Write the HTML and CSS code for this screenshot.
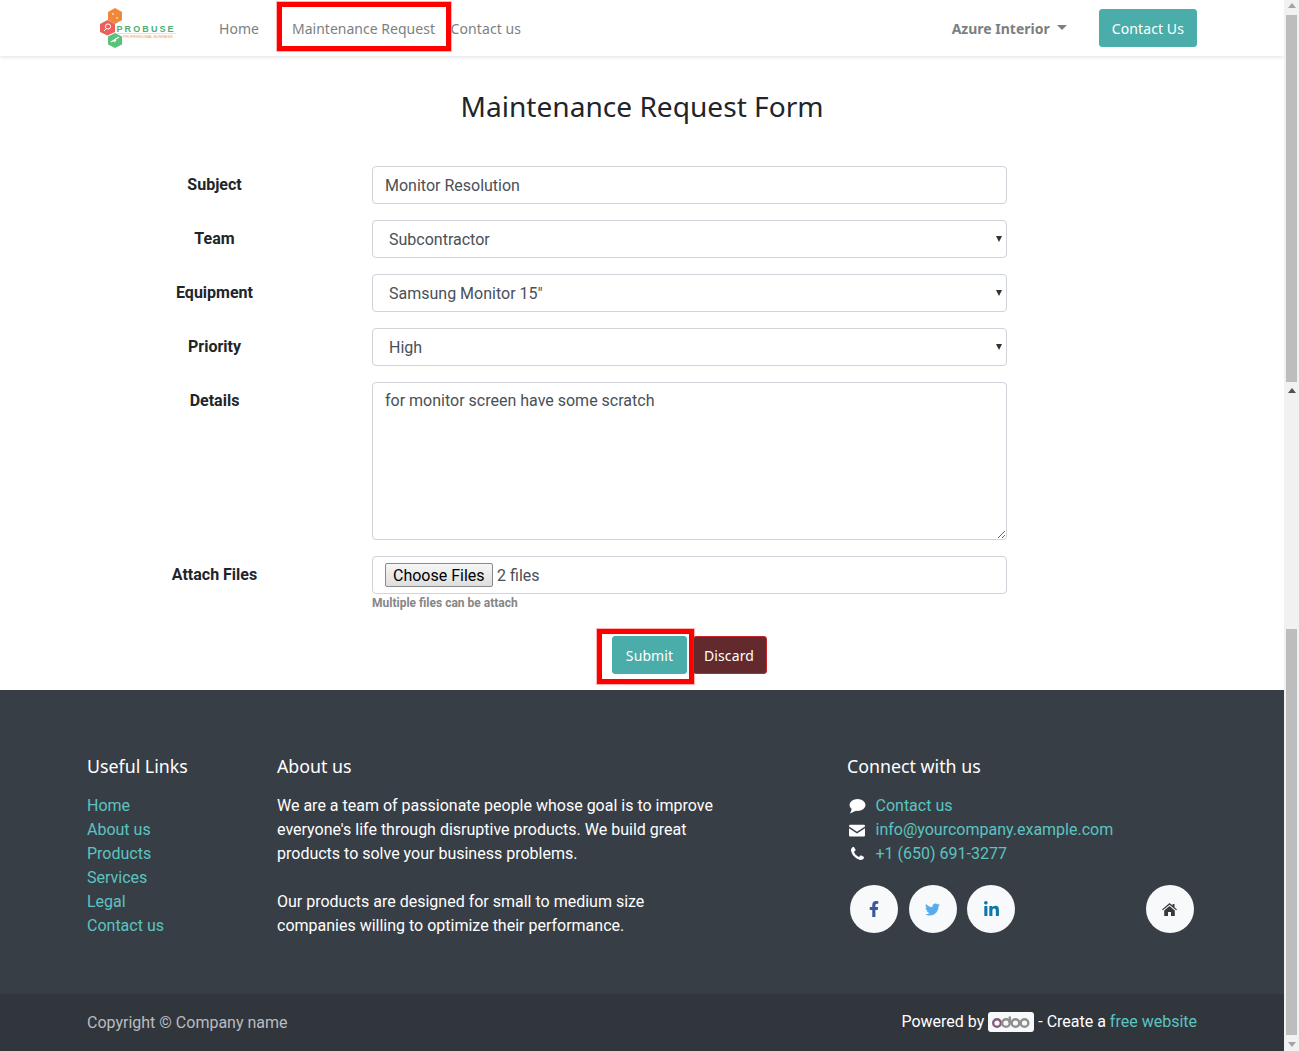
FILE: index.html
```html
<!DOCTYPE html>
<html lang="en">
<head>
<meta charset="utf-8">
<title>Maintenance Request Form</title>
<link rel="stylesheet" href="styles.css">
</head>
<body>
<div class="page">
  <header class="navbar">
    <div class="nav-inner">
      <a class="logo" href="#">
        <svg class="logo-mark" width="76" height="40" viewBox="0 0 76 40">
          <polygon points="15,0 22,4 22,12 15,16 8,12 8,4" fill="#f0883a"/>
          <polygon points="7.500,12 15,16 15,24 7.500,27.500 0,24 0,16" fill="#ee5f5b"/>
          <polygon points="15,25 22,28.500 22,36.500 15,40 8,36.500 8,28.500" fill="#5bc27a"/>
          <circle cx="8" cy="18.500" r="2.600" fill="none" stroke="#fff" stroke-width="1"/>
          <path d="M6 21l-2 2" stroke="#fff" stroke-width="1"/>
          <path d="M11 34l8-5M14 34l2-2" stroke="#fff" stroke-width="1.200"/>
          <circle cx="13" cy="6" r="1" fill="#fbd9b8"/><circle cx="17" cy="10" r="1" fill="#fbd9b8"/>
          <text x="16.500" y="23.500" class="logo-name">PROBUSE</text>
          <path d="M17 25.500h59" stroke="#d8d8d8" stroke-width=".7"/>
          <text x="23" y="29.500" class="logo-sub">PROFESSIONAL BUSINESS</text>
        </svg>
      </a>
      <nav class="nav-links">
        <a class="nav-link home" href="#">Home</a>
        <a class="nav-link marked" href="#">Maintenance Request</a>
        <a class="nav-link contact" href="#">Contact us</a>
      </nav>
      <div class="nav-right">
        <a class="user" href="#">Azure Interior<span class="caret"></span></a>
        <a class="btn btn-teal" href="#">Contact Us</a>
      </div>
    </div>
  </header>

  <main class="main">
    <h1 class="title">Maintenance Request Form</h1>
    <form class="form">
      <div class="row">
        <label class="label">Subject</label>
        <div class="field"><input class="control" type="text" value="Monitor Resolution"></div>
      </div>
      <div class="row">
        <label class="label">Team</label>
        <div class="field select-wrap"><select class="control plain"><option>Subcontractor</option></select></div>
      </div>
      <div class="row">
        <label class="label">Equipment</label>
        <div class="field select-wrap"><select class="control plain"><option>Samsung Monitor 15"</option></select></div>
      </div>
      <div class="row">
        <label class="label">Priority</label>
        <div class="field select-wrap"><select class="control plain"><option>High</option></select></div>
      </div>
      <div class="row">
        <label class="label">Details</label>
        <div class="field"><textarea class="control area">for monitor screen have some scratch</textarea></div>
      </div>
      <div class="row row-file">
        <label class="label">Attach Files</label>
        <div class="field">
          <div class="control file"><button class="file-btn" type="button">Choose Files</button><span class="file-name">2 files</span></div>
          <small class="hint">Multiple files can be attach</small>
        </div>
      </div>
      <div class="actions">
        <div class="marked-submit"><button class="btn btn-teal submit" type="button">Submit</button></div>
        <button class="btn btn-discard" type="button">Discard</button>
      </div>
    </form>
  </main>

  <footer class="footer">
    <div class="footer-top">
      <div class="footer-grid">
        <div>
          <h5 class="foot-title">Useful Links</h5>
          <ul class="foot-list">
            <li><a href="#">Home</a></li>
            <li><a href="#">About us</a></li>
            <li><a href="#">Products</a></li>
            <li><a href="#">Services</a></li>
            <li><a href="#">Legal</a></li>
            <li><a href="#">Contact us</a></li>
          </ul>
        </div>
        <div class="about">
          <h5 class="foot-title">About us</h5>
          <p>We are a team of passionate people whose goal is to improve everyone's life through disruptive products. We build great products to solve your business problems.</p>
          <p>Our products are designed for small to medium size companies willing to optimize their performance.</p>
        </div>
        <div class="connect">
          <h5 class="foot-title">Connect with us</h5>
          <ul class="foot-list contact-list">
            <li><svg class="c-icon" viewBox="0 0 18 16"><ellipse cx="9.500" cy="7" rx="8" ry="6" fill="#fff"/><path d="M4 10.500L2 15.500 8.500 12.500z" fill="#fff"/></svg><a href="#">Contact us</a></li>
            <li><svg class="c-icon" viewBox="0 0 18 16"><g transform="translate(1 1.500) scale(.889 .87)"><path d="M1.500 1.500h15c.8 0 1.500.7 1.500 1.500v.5L9 9.500 0 3.500V3c0-.8.7-1.500 1.500-1.500z" fill="#fff"/><path d="M0 5.500l9 6 9-6V13.500c0 .8-.7 1.500-1.500 1.500h-15C.7 15 0 14.300 0 13.500z" fill="#fff"/></g></svg><a href="#">info@yourcompany.example.com</a></li>
            <li><svg class="c-icon" viewBox="0 0 18 16"><g transform="translate(3 1) scale(.0092)"><path transform="translate(-192 -128)" fill="#fff" d="M1600 1240q0 27-10 70.500t-21 68.500q-21 50-122 106-94 51-186 51-27 0-53-3.500t-57.500-12.500-47-14.500-55.500-20.500-49-18q-98-35-175-83-127-79-264-216t-216-264q-48-77-83-175-3-9-18-49t-20.500-55.500-14.500-47-12.500-57.500-3.500-53q0-92 51-186 56-101 106-122 25-11 68.500-21t70.500-10q14 0 21 3 18 6 53 76 11 19 30 54t35 63.500 31 53.500q3 4 17.500 25t21.500 35.500 7 28.500q0 20-28.500 50t-62 55-62 53-28.500 46q0 9 5 22.500t8.500 20.500 14 24 11.500 19q76 137 174 235t235 174q2 1 19 11.500t24 14 20.500 8.500 22.500 5q18 0 46-28.500t53-62 55-62 50-28.500q14 0 28.500 7t35.500 21.500 25 17.500q25 15 53.500 31t63.500 35 54 30q70 35 76 53 3 7 3 21z"/></g></svg><a href="#">+1 (650) 691-3277</a></li>
          </ul>
          <div class="socials">
            <a class="social" href="#"><svg width="10" height="16" viewBox="0 0 320 512"><path fill="#3b5998" d="M279.140 288l14.220-92.660h-88.910v-60.130c0-25.350 12.420-50.060 52.240-50.060h40.420V6.260S260.430 0 225.360 0c-73.220 0-121.080 44.380-121.080 124.720v70.620H22.890V288h81.390v224h100.170V288z"/></svg></a>
            <a class="social s2" href="#"><svg width="15" height="15" viewBox="0 0 512 512"><path fill="#55acee" d="M459.370 151.716c.325 4.548.325 9.097.325 13.645 0 138.720-105.583 298.558-298.558 298.558-59.452 0-114.680-17.219-161.137-47.106 8.447.974 16.568 1.299 25.340 1.299 49.055 0 94.213-16.568 130.274-44.832-46.132-.975-84.792-31.188-98.112-72.772 6.498.974 12.995 1.624 19.818 1.624 9.421 0 18.843-1.300 27.614-3.573-48.081-9.747-84.143-51.980-84.143-102.985v-1.299c13.969 7.797 30.214 12.670 47.431 13.319-28.264-18.843-46.781-51.005-46.781-87.391 0-19.492 5.197-37.360 14.294-52.954 51.655 63.675 129.300 105.258 216.365 109.807-1.624-7.797-2.599-15.918-2.599-24.040 0-57.828 46.782-104.934 104.934-104.934 30.213 0 57.502 12.670 76.670 33.137 23.715-4.548 46.456-13.320 66.599-25.340-7.798 24.366-24.366 44.833-46.132 57.827 21.117-2.273 41.584-8.122 60.426-16.243-14.292 20.791-32.161 39.308-52.628 54.253z"/></svg></a>
            <a class="social s3" href="#"><svg width="15" height="17" viewBox="0 0 448 512"><path fill="#0e76a8" d="M100.280 448H7.400V148.900h92.880zM53.790 108.100C24.090 108.100 0 83.500 0 53.800a53.790 53.790 0 0 1 107.580 0c0 29.700-24.100 54.300-53.790 54.300zM447.900 448h-92.680V302.400c0-34.700-.7-79.200-48.290-79.200-48.290 0-55.690 37.700-55.690 76.700V448h-92.780V148.900h89.080v40.800h1.300c12.400-23.500 42.690-48.300 87.880-48.300 94 0 111.280 61.900 111.280 142.300V448z"/></svg></a>
            <a class="social s4" href="#"><svg width="15" height="13" viewBox="0 0 15 13"><path fill="#343a40" d="M7.500 0L0 6.400l.8.900L7.500 1.700l6.700 5.600.8-.9-2.500-2.100V.9h-1.800v1.700z"/><path fill="#343a40" d="M7.500 3L2.200 7.400V13h3.800V9h3v4h3.800V7.400z"/></svg></a>
          </div>
        </div>
      </div>
    </div>
    <div class="footer-bottom">
      <div class="bottom-inner">
        <span class="copy">Copyright © Company name</span>
        <span class="powered">Powered by <span class="odoo"><svg width="40" height="14" viewBox="0 0 40 14"><circle cx="6" cy="8" r="3.800" fill="none" stroke="#875a7b" stroke-width="2.400"/><circle cx="15" cy="8" r="3.800" fill="none" stroke="#8f8f8f" stroke-width="2.400"/><path d="M18.800 1.500V8" stroke="#8f8f8f" stroke-width="2.400"/><circle cx="24.500" cy="8" r="3.800" fill="none" stroke="#8f8f8f" stroke-width="2.400"/><circle cx="33.500" cy="8" r="3.800" fill="none" stroke="#8f8f8f" stroke-width="2.400"/></svg></span> - Create a <a href="#">free website</a></span>
      </div>
    </div>
  </footer>

  <div class="scrollbar" aria-hidden="true">
    <span class="sb-arrow up"></span>
    <span class="sb-thumb t1"></span>
    <span class="sb-arrow up a2"></span>
    <span class="sb-thumb t2"></span>
    <span class="sb-arrow down"></span>
  </div>
</div>
</body>
</html>
```

FILE: styles.css
```css
* { box-sizing: border-box; }
html, body { margin: 0; padding: 0; height: 1051px; overflow: hidden; }
body { font-family: Roboto, sans-serif; font-size: 16px; line-height: 24px; color: #212529; background: #fff; }
a { text-decoration: none; }
.page { position: relative; width: 1299px; height: 1051px; padding-right: 15px; overflow: hidden; }

.navbar { height: 56px; background: #fff; box-shadow: 0 1px 4px rgba(0,0,0,.12); position: relative; font-family: "Noto Sans", sans-serif; }
.nav-inner { display: flex; height: 56px; margin: 0 87px 0 100px; }
.logo { display: block; width: 76px; margin-top: 8px; }
.logo-mark { display: block; }
.logo-name { font-family: "Liberation Sans", sans-serif; font-size: 9px; font-weight: 700; letter-spacing: 2.100px; fill: #4fae73; }
.logo-sub { font-family: "Liberation Sans", sans-serif; font-size: 3.800px; fill: #ef9a4c; }
.nav-links { display: flex; margin-left: 43px; }
.nav-link { color: #7c7f82; font-size: 14px; line-height: 24px; letter-spacing: .02px; }
.home { padding-top: 17px; margin-right: 18px; }
.marked { height: 49px; margin-top: 2px; border: 5px solid #f00; padding: 10px 10.500px 0 10px; box-shadow: 0 0 0 1px rgba(255,0,0,.3); }
.contact { padding-top: 17px; letter-spacing: .1px; }
.nav-right { margin-left: auto; display: flex; align-items: center; }
.user { color: #7c7f82; font-size: 14px; font-weight: 700; display: flex; align-items: center; margin-right: 32px; padding-top: 1px; }
.caret { width: 0; height: 0; margin-left: 7px; margin-top: -3px; border: 5px solid transparent; border-top-color: #7c7f82; border-bottom: 0; }
.btn { display: inline-block; font-family: "Noto Sans", sans-serif; font-size: 14px; line-height: 24px; padding: 7px 12px 5px; border: 1px solid transparent; border-radius: 3px; color: #fff; letter-spacing: .1px; cursor: pointer; }
.btn-teal { background: #4aadaa; border-color: #4aadaa; }
.nav-right .btn { height: 38px; }

.main { height: 634px; }
.title { margin: 0; padding-top: 31px; height: 110px; text-align: center; font-family: "Noto Sans", sans-serif; font-weight: 400; font-size: 28.100px; line-height: 38px; color: #212529; }
.form { padding-left: 72px; }
.row { display: flex; margin-bottom: 16px; }
.label { width: 285px; text-align: center; font-weight: 700; line-height: 38px; color: #212529; }
.field { width: 635px; margin-left: 15px; }
.control { display: block; width: 100%; height: 38px; padding: 6px 12px; font-family: Roboto, sans-serif; font-size: 16px; line-height: 24px; color: #495057; background: #fff; border: 1px solid #ced4da; border-radius: 4px; }
.plain { appearance: none; padding: 7px 12px 5px 16px; }
.select-wrap { position: relative; }
.select-wrap::after { content: ""; position: absolute; right: 5px; top: 16px; border: 3.500px solid transparent; border-top: 6px solid #333; border-bottom: 0; pointer-events: none; }
.area { height: 158px; }
.row-file { margin-bottom: 0; }
.file { display: flex; align-items: center; }
.file-btn { height: 24px; padding: 0 7px; font-family: Roboto, sans-serif; font-size: 16px; color: #000; background: linear-gradient(#f6f6f6, #dedede); border: 1px solid #8a8a8a; border-radius: 2px; }
.file-name { margin-left: 4px; padding-top: 1px; padding-left: .5px; }
.hint { display: block; font-size: 12px; line-height: 18px; font-weight: 700; color: #868686; }
.actions { display: flex; margin-top: 17px; padding-left: 525px; }
.marked-submit { display: flex; height: 55px; width: 97px; border: 5px solid #f00; padding: 2px 0 0 10px; box-shadow: 0 0 0 1px rgba(255,0,0,.3); }
.submit { height: 38px; width: 75px; padding: 7px 0 5px; text-align: center; }
.btn-discard { margin-left: -1px; margin-top: 7px; height: 38px; width: 74px; padding: 7px 2px 5px 0; background: #632a2e; border: 1px solid #c8242b; }

.footer { color: #fff; }
.footer-top { height: 304px; background: #383e46; padding: 64px 87px 0; }
.footer-grid { display: grid; grid-template-columns: 190px 445px 375px; }
.connect { margin-left: 125px; width: 350px; }
.foot-title { margin: 0 0 16px; font-family: "Noto Sans", sans-serif; font-weight: 400; font-size: 17.800px; line-height: 24px; }
.foot-list { list-style: none; margin: 0; padding: 0; }
.foot-list a, .powered a { color: #5cc4c0; }
.about p { margin: 0 0 24px; }
.contact-list li { display: flex; align-items: center; }
.c-icon { width: 18px; height: 16px; margin-left: 1px; margin-right: 9.500px; flex: none; }
.socials { display: flex; margin-top: 19px; margin-left: 3px; }
.social { width: 48px; height: 48px; border-radius: 50%; background: #f8f9fa; display: flex; align-items: center; justify-content: center; }
.s2 { margin-left: 11px; }
.s2 svg, .s4 svg { margin-right: 2px; }
.s3 { margin-left: 10px; }
.s4 { margin-left: 131px; }
.footer-bottom { height: 57px; background: #31363d; }
.bottom-inner { display: flex; justify-content: space-between; align-items: center; height: 57px; padding: 0 87px; }
.copy { color: #b9bcc0; }
.powered { display: flex; align-items: center; white-space: pre; margin-top: -2px; }
.odoo { display: inline-flex; align-items: center; justify-content: center; width: 46px; height: 20px; background: #f8f9fa; border-radius: 3px; }

.scrollbar { position: absolute; top: 0; right: 0; width: 15px; height: 1051px; background: #f1f1f1; }
.sb-thumb { position: absolute; left: 2px; width: 11px; background: #bdbdbd; }
.t1 { top: 15px; height: 367px; }
.t2 { top: 629px; height: 406px; }
.sb-arrow { position: absolute; left: 3.500px; width: 0; height: 0; border: 4px solid transparent; }
.up { top: 3px; border-top: 0; border-bottom: 5px solid #a3a3a3; }
.a2 { top: 388px; border-bottom-color: #505050; }
.down { top: 1042px; border-bottom: 0; border-top: 5px solid #a3a3a3; }
```
